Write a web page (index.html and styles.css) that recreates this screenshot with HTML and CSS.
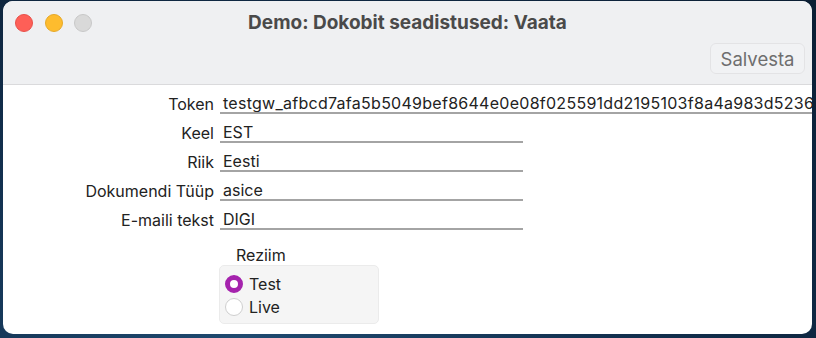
FILE: index.html
```
<!DOCTYPE html>
<html lang="et">
<head>
<meta charset="utf-8">
<title>Demo: Dokobit seadistused: Vaata</title>
<link rel="stylesheet" href="styles.css">
</head>
<body>
<div class="window">
  <header class="toolbar">
    <div class="titlebar">
      <div class="lights">
        <span class="light red"></span>
        <span class="light yellow"></span>
        <span class="light gray"></span>
      </div>
      <div class="title">Demo: Dokobit seadistused: Vaata</div>
    </div>
    <div class="actions">
      <button class="btn">Salvesta</button>
    </div>
  </header>
  <main class="content">
    <div class="form">
      <label class="lbl">Token</label>
      <div class="field wide">testgw_afbcd7afa5b5049bef8644e0e08f025591dd2195103f8a4a983d5236</div>
      <label class="lbl">Keel</label>
      <div class="field">EST</div>
      <label class="lbl">Riik</label>
      <div class="field">Eesti</div>
      <label class="lbl">Dokumendi Tüüp</label>
      <div class="field">asice</div>
      <label class="lbl">E-maili tekst</label>
      <div class="field">DIGI</div>
    </div>
    <div class="mode">
      <div class="mode-title">Reziim</div>
      <div class="radios">
        <div class="radio-row"><span class="radio on"></span><span>Test</span></div>
        <div class="radio-row"><span class="radio"></span><span>Live</span></div>
      </div>
    </div>
  </main>
</div>
</body>
</html>
```
FILE: styles.css
```
html, body {
  margin: 0;
  padding: 0;
}
body {
  width: 816px;
  height: 338px;
  overflow: hidden;
  background: radial-gradient(ellipse at 30% 100%, #1f4a70 0%, #12304f 45%, #0b1e33 100%);
  font-family: Inter, "Noto Sans", sans-serif;
  color: #222;
}
.window {
  margin: 1px 4px 0 3px;
  height: 333px;
  width: 809px;
  border-radius: 10px;
  background: #ffffff;
  overflow: hidden;
  display: flex;
  flex-direction: column;
}
.toolbar {
  background: #eff0f2;
  height: 83px;
  border-bottom: 1px solid #dadadc;
  display: flex;
  flex-direction: column;
}
.titlebar {
  height: 42px;
  display: flex;
  align-items: center;
  position: relative;
}
.lights {
  display: flex;
  gap: 11.5px;
  padding-left: 12px;
  padding-top: 1px;
}
.light {
  width: 18px;
  height: 18px;
  border-radius: 50%;
  box-sizing: border-box;
}
.red { background: #fe5f57; border: 0.5px solid #e8504a; }
.yellow { background: #febc2e; border: 0.5px solid #e6a928; }
.gray { background: #d9d9d9; border: 0.5px solid #c8c8c8; }
.title {
  position: absolute;
  left: 0;
  right: 0;
  top: 0;
  bottom: 0;
  display: flex;
  align-items: center;
  justify-content: center;
  font-weight: 700;
  font-size: 19px;
  color: #4a4a4a;
  pointer-events: none;
}
.actions {
  display: flex;
  justify-content: flex-end;
  padding-right: 7px;
}
.btn {
  font-family: inherit;
  font-size: 18.5px;
  color: #6e6e6e;
  background: #f1f2f4;
  border: 1px solid #e3e3e5;
  border-radius: 6px;
  width: 95px;
  height: 31px;
  padding: 0;
}
.content {
  flex: 1;
  display: flex;
  flex-direction: column;
}
.form {
  display: grid;
  grid-template-columns: 211px 1fr;
  column-gap: 6px;
  row-gap: 9px;
  padding-top: 9px;
  font-size: 16px;
}
.lbl {
  text-align: right;
  line-height: 20px;
  height: 20px;
  white-space: nowrap;
  color: #222;
}
.field {
  width: 303px;
  height: 20px;
  line-height: 19px;
  box-sizing: border-box;
  border-bottom: 2px solid #a4a4a4;
  padding-left: 3px;
  white-space: nowrap;
  overflow: hidden;
  color: #222;
}
.field.wide {
  width: auto;
  letter-spacing: 0.27px;
}
.mode {
  margin-top: 15px;
  margin-left: 216px;
  width: 160px;
  font-size: 16px;
}
.mode-title {
  padding-left: 17px;
  height: 20px;
  line-height: 20px;
  color: #222;
}
.radios {
  background: #f5f5f5;
  border: 1px solid #ebebeb;
  border-radius: 5px;
  padding: 6px 5px 5px 5px;
  display: flex;
  flex-direction: column;
}
.radio-row {
  display: flex;
  align-items: center;
  gap: 6px;
  height: 23px;
  color: #222;
}
.radio {
  width: 18px;
  height: 18px;
  border-radius: 50%;
  box-sizing: border-box;
  background: #fff;
  border: 1px solid #cfcfcf;
}
.radio.on {
  background: #ffffff;
  border: 5.5px solid #a523ad;
}
```
